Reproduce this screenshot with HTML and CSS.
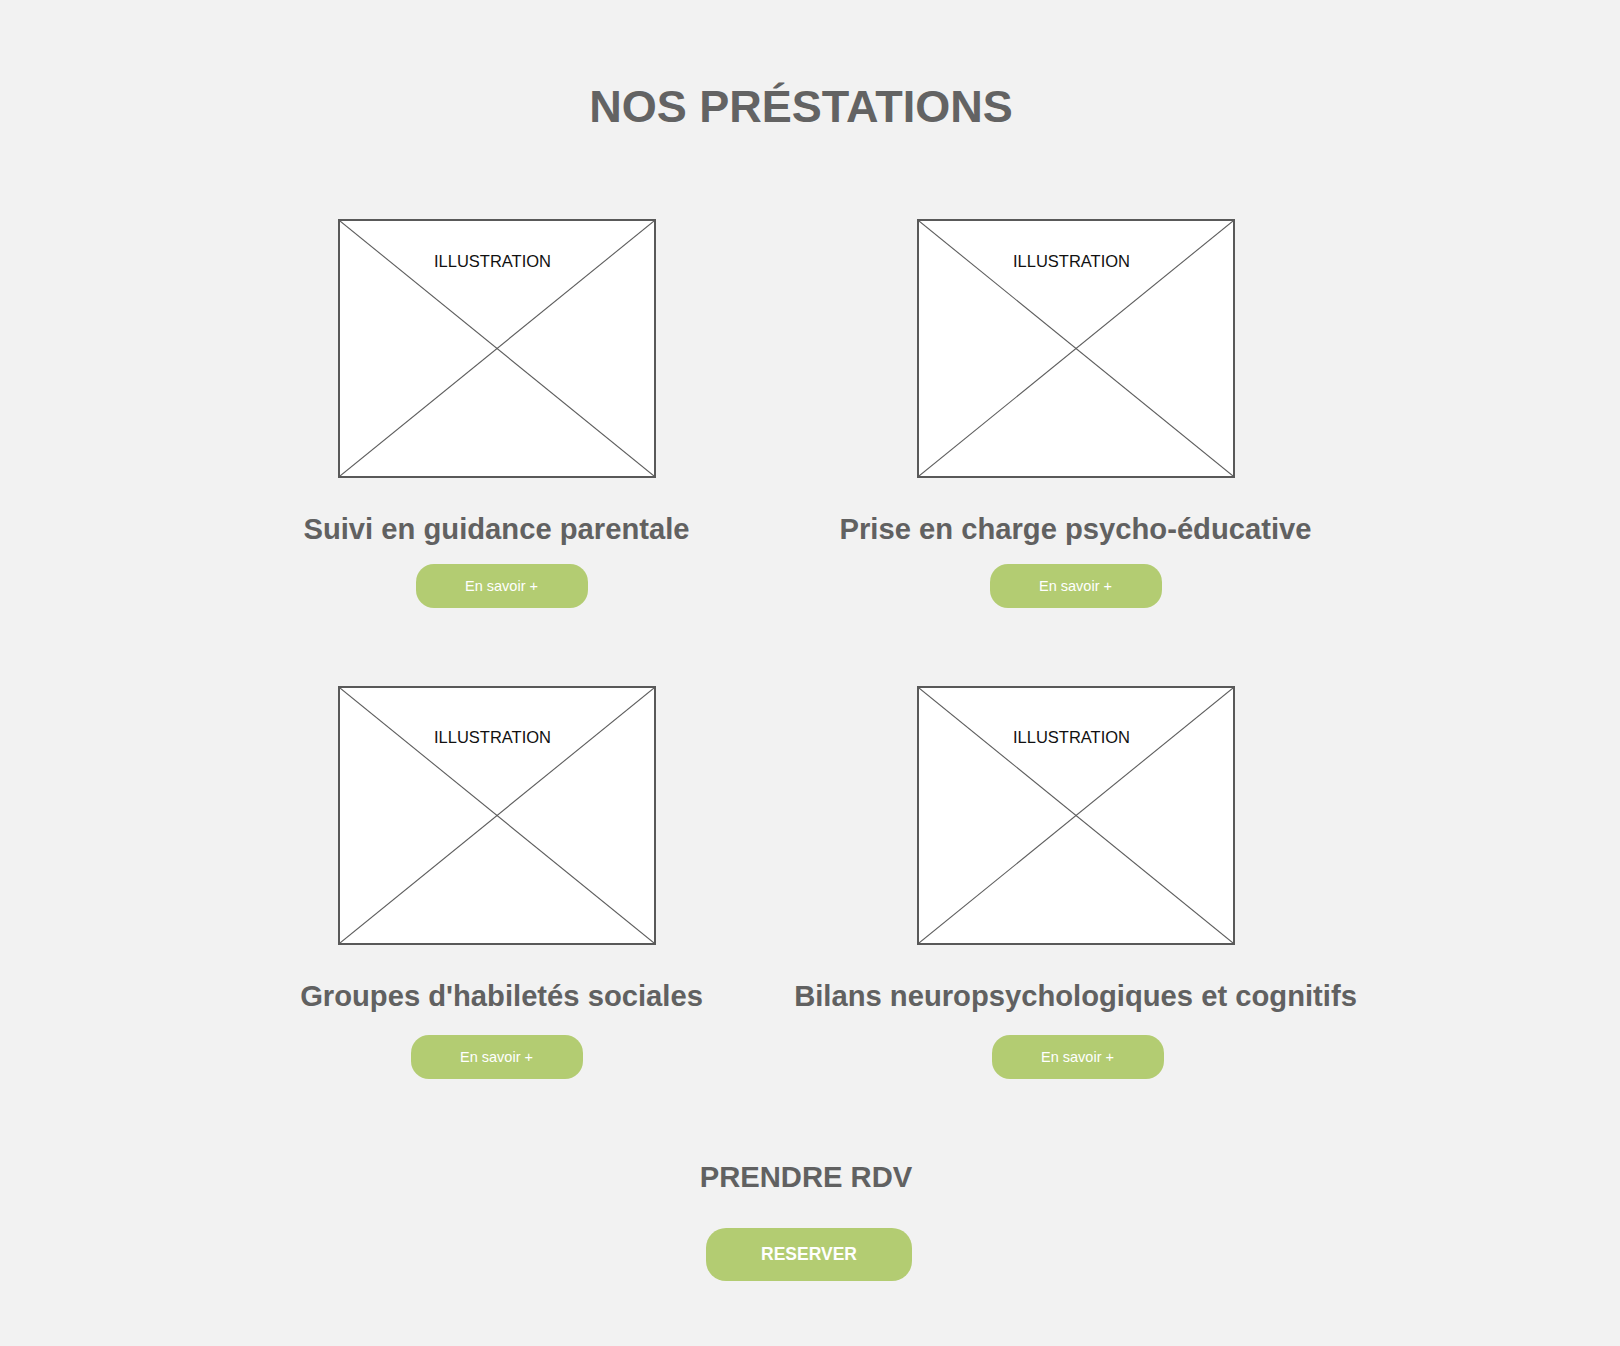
FILE: index.html
```html
<!DOCTYPE html>
<html lang="fr">
<head>
<meta charset="utf-8">
<title>Nos préstations</title>
<link rel="stylesheet" href="styles.css">
</head>
<body>
<main class="page">
  <h1 class="title">NOS PRÉSTATIONS</h1>
  <section class="grid">
    <article class="card">
      <div class="illu">
        <svg class="illu-cross" viewBox="0 0 100 100" preserveAspectRatio="none" aria-hidden="true"><line x1="0" y1="0" x2="100" y2="100"/><line x1="0" y1="100" x2="100" y2="0"/></svg>
        <span class="illu-label">ILLUSTRATION</span>
      </div>
      <h2 class="card-title">Suivi en guidance parentale</h2>
      <a class="btn-more btn-more--nudge" href="#">En savoir +</a>
    </article>
    <article class="card">
      <div class="illu">
        <svg class="illu-cross" viewBox="0 0 100 100" preserveAspectRatio="none" aria-hidden="true"><line x1="0" y1="0" x2="100" y2="100"/><line x1="0" y1="100" x2="100" y2="0"/></svg>
        <span class="illu-label">ILLUSTRATION</span>
      </div>
      <h2 class="card-title">Prise en charge psycho-éducative</h2>
      <a class="btn-more" href="#">En savoir +</a>
    </article>
    <article class="card card--low">
      <div class="illu">
        <svg class="illu-cross" viewBox="0 0 100 100" preserveAspectRatio="none" aria-hidden="true"><line x1="0" y1="0" x2="100" y2="100"/><line x1="0" y1="100" x2="100" y2="0"/></svg>
        <span class="illu-label">ILLUSTRATION</span>
      </div>
      <h2 class="card-title card-title--nudge">Groupes d'habiletés sociales</h2>
      <a class="btn-more" href="#">En savoir +</a>
    </article>
    <article class="card card--low">
      <div class="illu">
        <svg class="illu-cross" viewBox="0 0 100 100" preserveAspectRatio="none" aria-hidden="true"><line x1="0" y1="0" x2="100" y2="100"/><line x1="0" y1="100" x2="100" y2="0"/></svg>
        <span class="illu-label">ILLUSTRATION</span>
      </div>
      <h2 class="card-title">Bilans neuropsychologiques et cognitifs</h2>
      <a class="btn-more btn-more--nudge-sm" href="#">En savoir +</a>
    </article>
  </section>
  <section class="cta">
    <h2 class="cta-title">PRENDRE RDV</h2>
    <a class="btn-reserve" href="#">RESERVER</a>
  </section>
</main>
</body>
</html>
```

FILE: styles.css
```css
html, body {
  margin: 0;
  padding: 0;
  background: #f2f2f2;
}

body {
  font-family: "Liberation Sans", Arial, sans-serif;
  color: #616161;
}

.page {
  min-height: 1346px;
  padding-top: 82px;
  box-sizing: border-box;
}

.title {
  margin: 0;
  padding-right: 18px;
  text-align: center;
  font-size: 45px;
  line-height: 50px;
  font-weight: 700;
  color: #636363;
}

.grid {
  width: 1158px;
  margin: 87px 0 0 207px;
  display: grid;
  grid-template-columns: 1fr 1fr;
  row-gap: 78px;
}

.card {
  display: flex;
  flex-direction: column;
  align-items: center;
}

.illu {
  position: relative;
  width: 318px;
  height: 259px;
  box-sizing: border-box;
  border: 2px solid #595959;
  background-color: #ffffff;
  display: flex;
  justify-content: center;
  align-items: flex-start;
  padding: 31px 8px 0 0;
}

.card--low .illu {
  padding-top: 40px;
}

.illu-cross {
  position: absolute;
  inset: 0;
  width: 100%;
  height: 100%;
}

.illu-cross line {
  stroke: #5e5e5e;
  stroke-width: 1.1px;
  vector-effect: non-scaling-stroke;
}

.illu-label {
  position: relative;
  font-size: 16.5px;
  line-height: 19px;
  color: #111111;
}

.card-title {
  margin: 34px 0 0;
  font-size: 29.2px;
  line-height: 34px;
  font-weight: 700;
  color: #616161;
  white-space: nowrap;
}

.card-title--nudge {
  margin-left: 10px;
}

.btn-more {
  margin-top: 18px;
  width: 172px;
  height: 44px;
  border-radius: 18px;
  background: #b3cc72;
  color: #ffffff;
  font-size: 14.5px;
  text-decoration: none;
  display: flex;
  align-items: center;
  justify-content: center;
}

.btn-more--nudge {
  margin-left: 10px;
}

.btn-more--nudge-sm {
  margin-left: 4px;
}

.card--low .btn-more {
  margin-top: 22px;
}

.cta {
  margin-top: 82px;
  display: flex;
  flex-direction: column;
  align-items: center;
  padding-right: 2px;
}

.cta-title {
  margin: 0 6px 0 0;
  font-size: 29.2px;
  line-height: 32px;
  font-weight: 700;
  color: #616161;
}

.btn-reserve {
  margin-top: 35px;
  width: 206px;
  height: 53px;
  border-radius: 20px;
  background: #b3cc72;
  color: #ffffff;
  font-size: 17.5px;
  font-weight: 700;
  text-decoration: none;
  display: flex;
  align-items: center;
  justify-content: center;
}
```
